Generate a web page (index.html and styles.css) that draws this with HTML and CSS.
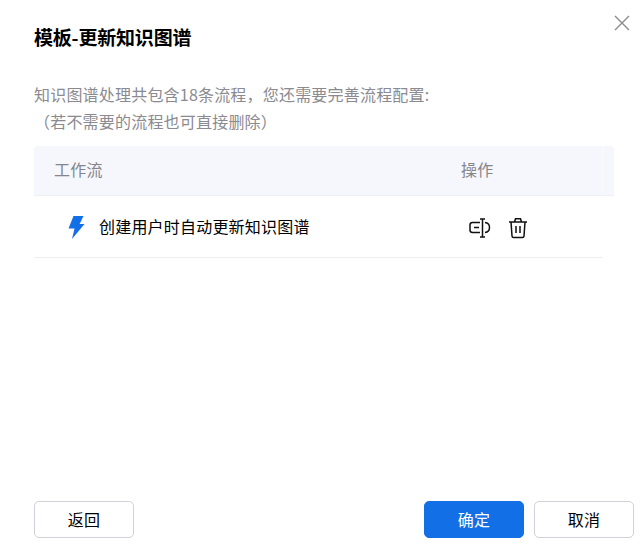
FILE: index.html
```html
<!DOCTYPE html>
<html lang="zh-CN">
<head>
<meta charset="utf-8">
<title>模板-更新知识图谱</title>
<link rel="stylesheet" href="styles.css">
</head>
<body>
<div class="dialog">
  <button class="close" aria-label="关闭">
    <svg width="16" height="16" viewBox="0 0 16 16"><path d="M1 1L15 15M15 1L1 15" fill="none" stroke="#8a8a8a" stroke-width="1.4"/></svg>
  </button>
  <h1 class="title">模板-更新知识图谱</h1>
  <p class="desc">知识图谱处理共包含18条流程，您还需要完善流程配置:</p>
  <p class="desc">（若不需要的流程也可直接删除）</p>
  <div class="table">
    <div class="thead">
      <div class="th th-name">工作流</div>
      <div class="th th-action">操作</div>
      <div class="th-gutter"></div>
    </div>
    <div class="row">
      <div class="cell-name">
        <svg class="bolt" width="18" height="23" viewBox="0 0 18 23"><path d="M6.500 0H16.500L12.600 8H17.500L5 23L7.600 12.600H1.500Z" fill="#136fe5"/></svg>
        <span>创建用户时自动更新知识图谱</span>
      </div>
      <div class="cell-action">
        <svg width="22" height="20" viewBox="0 0 22 20" fill="none" stroke="#111" stroke-width="1.500"><path d="M11 4.500H3.500Q1 4.500 1 7V12Q1 14.500 3.500 14.500H11"/><path d="M16 4.500Q20.500 5 20.500 9.500Q20.500 14 16 14.500"/><path d="M13.500 1V19M11 1H16M11 19H16M5 9.500H10"/></svg>
        <svg width="20" height="22" viewBox="0 0 20 22" fill="none" stroke="#111" stroke-width="1.500"><path d="M1 5H19M6.500 5L7.500 1.800H12.500L13.500 5M3 5L4 19Q4.100 20.500 5.500 20.500H14.500Q15.900 20.500 16 19L17 5M8 9V16M12 9V16"/></svg>
      </div>
    </div>
  </div>
  <div class="footer">
    <button class="btn">返回</button>
    <div class="footer-right">
      <button class="btn primary">确定</button>
      <button class="btn">取消</button>
    </div>
  </div>
</div>
</body>
</html>
```

FILE: styles.css
```css
* { box-sizing: border-box; }
html, body { margin: 0; padding: 0; background: #fff; }
body { font-family: "Noto Sans CJK SC", "Liberation Sans", sans-serif; }
.dialog {
  position: relative;
  width: 641px;
  height: 552px;
  padding: 23px 7px 14px 34px;
  display: flex;
  flex-direction: column;
}
.close {
  position: absolute;
  top: 15px;
  right: 11px;
  width: 16px;
  height: 16px;
  padding: 0;
  border: 0;
  background: none;
  line-height: 0;
}
.title {
  margin: 0 0 31px;
  font-size: 19px;
  letter-spacing: -0.200px;
  line-height: 27px;
  font-weight: 700;
  color: #000;
}
.desc {
  margin: 0;
  font-size: 16px;
  letter-spacing: 0.200px;
  line-height: 27px;
  height: 27px;
  color: #8a8a90;
}
.table { margin-top: 11px; width: 580px; }
.thead {
  display: flex;
  height: 50px;
  padding-bottom: 3px;
  background: #f6f7fc;
  border-bottom: 1px solid #eeeff3;
  border-radius: 4px 4px 0 0;
}
.th {
  display: flex;
  align-items: center;
  font-size: 16px;
  letter-spacing: 0.200px;
  color: #85858b;
}
.th-name { width: 427px; padding-left: 20px; }
.th-action { width: 142px; position: relative; }
.th-action::after {
  content: "";
  position: absolute;
  top: 0;
  right: 0;
  bottom: -3px;
  width: 1px;
  background: #fbfbfd;
}
.th-gutter { flex: 1; }
.row {
  display: flex;
  align-items: center;
  width: 569px;
  height: 62px;
  border-bottom: 1px solid #eeeff2;
}
.cell-name {
  width: 435px;
  padding-left: 33px;
  display: flex;
  align-items: center;
  gap: 14px;
  font-size: 16px;
  letter-spacing: 0.200px;
  color: #000;
  padding-bottom: 2px;
}
.bolt { margin-top: 3px; }
.cell-action {
  display: flex;
  align-items: center;
  gap: 17px;
  margin-top: 3px;
}
.footer {
  margin-top: auto;
  display: flex;
  justify-content: space-between;
}
.footer-right { display: flex; gap: 10px; }
.btn {
  width: 100px;
  height: 37px;
  border: 1px solid #d0d1da;
  border-radius: 5px;
  background: #fff;
  font: inherit;
  font-size: 16px;
  letter-spacing: 0.200px;
  color: #000;
  padding: 0 0 2px;
}
.primary {
  background: #136fe5;
  border-color: #136fe5;
  color: #fff;
}
```
